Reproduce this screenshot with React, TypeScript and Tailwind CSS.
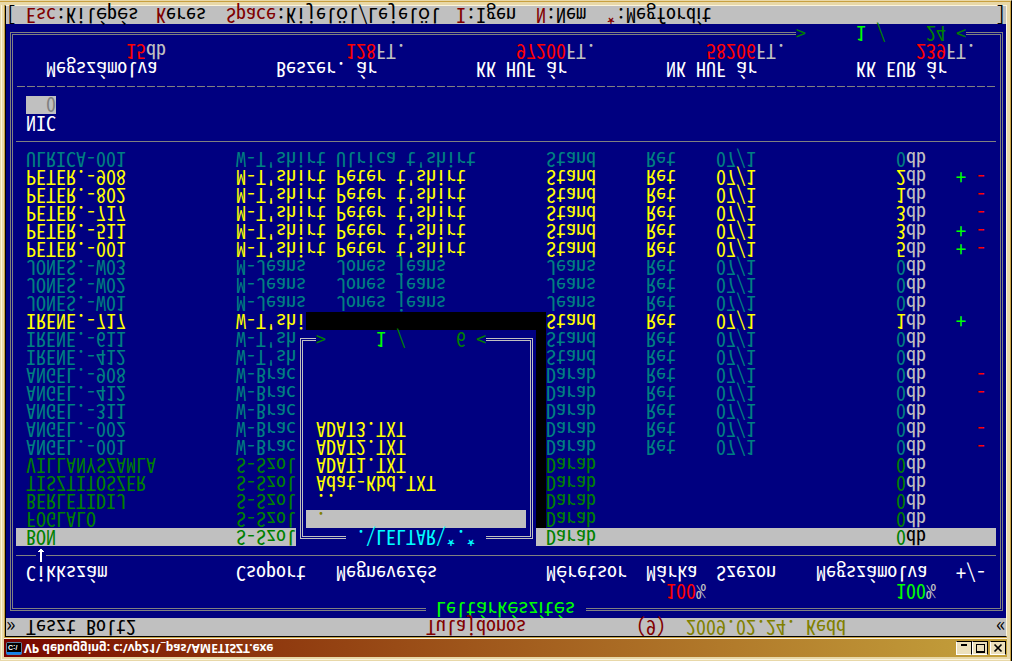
import React from "react";

type Seg = { at: number; text: string; tone: string };

/** One console line: a hundred equal character cells with text runs placed on them. */
function Line({ segs, className = "" }: { segs: Seg[]; className?: string }) {
  return (
    <div className={`grid h-[18px] grid-cols-[repeat(100,minmax(0,1fr))] ${className}`}>
      {segs.map((s, i) => {
        const cell = { gridColumn: `${s.at + 1} / span ${s.text.length}`, gridRow: 1 };
        return (
          <span key={i} style={cell} className={`whitespace-pre ${s.tone}`}>
            {s.text}
          </span>
        );
      })}
    </div>
  );
}

const statusBar: Seg[] = [
  { at: 0, text: "»", tone: "text-black" },
  { at: 2, text: "Teszt Bolt2", tone: "text-black" },
  { at: 42, text: "Tulajdonos", tone: "text-[#800000]" },
  { at: 63, text: "(9)", tone: "text-[#800000]" },
  { at: 68, text: "2009.02.24. Kedd", tone: "text-[#808000]" },
  { at: 99, text: "«", tone: "text-black" },
];

const menu = [
  { at: 2, hot: "Esc", rest: ":Kilépés" },
  { at: 15, hot: "K", rest: "eres" },
  { at: 22, hot: "Space", rest: ":Kijelöl/Lejelöl" },
  { at: 45, hot: "I", rest: ":Igen" },
  { at: 53, hot: "N", rest: ":Nem" },
  { at: 60, hot: "*", rest: ":Megfordít" },
];

const totalLabels: Seg[] = [
  { at: 4, text: "Megszámolva", tone: "text-white" },
  { at: 27, text: "Beszer. ár", tone: "text-white" },
  { at: 47, text: "KK HUF ár", tone: "text-white" },
  { at: 66, text: "NK HUF ár", tone: "text-white" },
  { at: 85, text: "KK EUR ár", tone: "text-white" },
];

const RED = "text-[#ff0000]";
const GREY = "text-[#c0c0c0]";

const totals: Seg[] = [
  { at: 12, text: "15", tone: RED },
  { at: 14, text: "db", tone: GREY },
  { at: 34, text: "128", tone: RED },
  { at: 37, text: "FT.", tone: GREY },
  { at: 51, text: "97200", tone: RED },
  { at: 56, text: "FT.", tone: GREY },
  { at: 70, text: "58206", tone: RED },
  { at: 75, text: "FT.", tone: GREY },
  { at: 91, text: "239", tone: RED },
  { at: 94, text: "FT.", tone: GREY },
];

const percents: Seg[] = [
  { at: 66, text: "100", tone: RED },
  { at: 69, text: "%", tone: GREY },
  { at: 89, text: "100", tone: "text-[#00ff00]" },
  { at: 92, text: "%", tone: GREY },
];

type Item = [code: string, group: string, name: string, size: string, count: number, marks: string];

const items: Item[] = [
  ["BON", "S-Szol", "", "Darab", 0, ""],
  ["FOGLALO", "S-Szol", "", "Darab", 0, ""],
  ["BERLETIDIJ", "S-Szol", "", "Darab", 0, ""],
  ["TISZTITOSZER", "S-Szol", "", "Darab", 0, ""],
  ["VILLANYSZAMLA", "S-Szol", "", "Darab", 0, ""],
  ["ANGEL.-001", "W-Brac", "", "Darab", 0, "-"],
  ["ANGEL.-002", "W-Brac", "", "Darab", 0, "-"],
  ["ANGEL.-311", "W-Brac", "", "Darab", 0, ""],
  ["ANGEL.-412", "W-Brac", "", "Darab", 0, "-"],
  ["ANGEL.-908", "W-Brac", "", "Darab", 0, "-"],
  ["IRENE.-412", "W-T'sh", "", "Stand", 0, ""],
  ["IRENE.-611", "W-T'sh", "", "Stand", 0, ""],
  ["IRENE.-717", "W-T'shi", "", "Stand", 1, "+"],
  ["JONES.-W01", "M-Jeans", "Jones jeans", "Jeans", 0, ""],
  ["JONES.-W02", "M-Jeans", "Jones jeans", "Jeans", 0, ""],
  ["JONES.-W03", "M-Jeans", "Jones jeans", "Jeans", 0, ""],
  ["PETER.-001", "M-T'shirt", "Peter t'shirt", "Stand", 5, "+-"],
  ["PETER.-511", "M-T'shirt", "Peter t'shirt", "Stand", 3, "+-"],
  ["PETER.-717", "M-T'shirt", "Peter t'shirt", "Stand", 3, "-"],
  ["PETER.-802", "M-T'shirt", "Peter t'shirt", "Stand", 1, "-"],
  ["PETER.-908", "M-T'shirt", "Peter t'shirt", "Stand", 2, "+-"],
  ["ULRICA-001", "W-T'shirt", "Ulrica t'shirt", "Stand", 0, ""],
];

const files = ["..", "Adat-Kbd.TXT", "ADAT1.TXT", "ADAT2.TXT", "ADAT3.TXT"];

function ItemRow({ item, selected }: { item: Item; selected: boolean }) {
  const [code, group, name, size, count, marks] = item;
  const service = group.startsWith("S-");
  const tone = service ? "text-[#008000]" : count > 0 ? "text-[#ffff00]" : "text-[#008080]";
  return (
    <tr className={`h-[18px] align-top ${tone} ${selected ? "bg-[#c0c0c0]" : ""}`}>
      <td className="p-0 pl-[10px]">{code}</td>
      <td className="p-0">{group}</td>
      <td className="p-0">{name}</td>
      <td className="p-0">{size}</td>
      <td className="p-0">{service ? "" : "Ret"}</td>
      <td className="p-0">{service ? "" : "07/1"}</td>
      <td className="p-0 pl-[80px]">
        {count}
        <span className={selected ? "text-black" : "text-[#c0c0c0]"}>db</span>
      </td>
      <td className="p-0">
        <div className="grid grid-cols-2">
          <span className="text-[#00ff00]">{marks.includes("+") ? "+" : ""}</span>
          <span className="text-[#ff0000]">{marks.includes("-") ? "-" : ""}</span>
        </div>
      </td>
    </tr>
  );
}

function ItemTable() {
  return (
    <table className="w-full table-fixed border-collapse whitespace-pre text-left">
      <colgroup>
        <col className="w-[220px]" />
        <col className="w-[100px]" />
        <col />
        <col className="w-[100px]" />
        <col className="w-[70px]" />
        <col className="w-[100px]" />
        <col className="w-[140px]" />
        <col className="w-[40px]" />
      </colgroup>
      <thead>
        <tr className="h-[18px] align-top text-white">
          <th className="p-0 pl-[10px] font-normal">Cikkszám</th>
          <th className="p-0 font-normal">Csoport</th>
          <th className="p-0 font-normal">Megnevezés</th>
          <th className="p-0 font-normal">Méretsor</th>
          <th className="p-0 font-normal">Márka</th>
          <th className="p-0 font-normal">Szezon</th>
          <th className="p-0 font-normal">Megszámolva</th>
          <th className="p-0 font-normal">+/-</th>
        </tr>
        <tr className="h-[18px]">
          <td colSpan={8} className="p-0">
            <div className="flex h-[18px] items-start">
              <div className="mt-[8px] h-px w-5 bg-[#808080]" />
              <svg className="h-[18px] w-[10px]" viewBox="0 0 10 18" aria-label="Rendezés">
                <path
                  d="M4 2H6V12H8V13H7V14H6V15H5V16H5V15H4V14H3V13H2V12H4Z"
                  fill="#fff"
                  shapeRendering="crispEdges"
                />
              </svg>
              <div className="mt-[8px] h-px flex-1 bg-[#808080]" />
            </div>
          </td>
        </tr>
      </thead>
      <tbody>
        {items.map((item, i) => (
          <ItemRow key={item[0]} item={item} selected={i === 0} />
        ))}
      </tbody>
    </table>
  );
}

function FileDialog() {
  return (
    <div
      role="dialog"
      className="absolute left-[280px] top-[36px] w-[240px] bg-[#000080] pt-[7px] pr-[3px] pb-[8px] pl-[4px] shadow-[10px_18px_0_0_#000]"
    >
      <div className="relative flex h-[201px] flex-col border-[3px] border-double border-[#c0c0c0] pt-[8px] pr-[4px] pl-[3px]">
        <div className="absolute -top-[10px] left-[43px] h-[18px] w-[140px] bg-[#000080] pl-[10px] text-[#00ffff]">
          .\LELTAR\*.*
        </div>
        <button className="h-[18px] bg-[#c0c0c0] pb-[2px] pl-[10px] text-left text-[#808000]">.</button>
        {files.map((f) => (
          <button key={f} className="h-[18px] pb-[2px] pl-[10px] text-left text-[#ffff00]">
            {f}
          </button>
        ))}
        <div className="absolute -bottom-[11px] left-[13px] grid h-[18px] w-[170px] grid-cols-[repeat(17,minmax(0,1fr))] bg-[#000080] text-[#008000]">
          <span className="col-start-1">{">"}</span>
          <span className="col-start-7 text-[#00ff00]">1</span>
          <span className="col-start-9">/</span>
          <span className="col-start-15">6</span>
          <span className="col-start-17">{"<"}</span>
        </div>
      </div>
    </div>
  );
}

const winButton =
  "flex h-[14px] w-4 items-center justify-center border border-t-white border-r-black border-b-black border-l-white bg-[#ece0bc]";

function TitleBar() {
  return (
    <div className="flex h-[18px] items-center bg-linear-to-r from-[#780000] to-[#c4a23c] pr-px pl-[2px]">
      <svg className="h-[14px] w-4" viewBox="0 0 16 14" aria-hidden="true">
        <rect x="0" y="0" width="16" height="13" rx="2" fill="#5f7f9f" />
        <rect x="0.5" y="0.5" width="15" height="3" rx="1" fill="#1484ee" />
        <rect x="1" y="3" width="14" height="9" fill="#000" />
        <text x="2" y="10" fontSize="7" fontWeight="700" fontFamily="Liberation Sans, sans-serif" fill="#fff">
          C:\
        </text>
      </svg>
      <h1 className="flex-1 pl-[2px] font-['Noto_Sans',sans-serif] text-[12px] leading-[18px] font-bold whitespace-pre text-white">
        VP debugging: c:\vp21\_pas\AMETISZT.exe
      </h1>
      <button aria-label="Kis méret" className={winButton}>
        <svg className="h-3 w-3" viewBox="0 0 12 12">
          <path d="M3 9H9" stroke="#000" strokeWidth="2" />
        </svg>
      </button>
      <button aria-label="Teljes méret" className={winButton}>
        <svg className="h-3 w-3" viewBox="0 0 12 12">
          <path d="M2 2H10V10H2Z M2 3H10" fill="none" stroke="#000" strokeWidth="1" shapeRendering="crispEdges" />
        </svg>
      </button>
      <button aria-label="Bezárás" className={`ml-[2px] ${winButton}`}>
        <svg className="h-3 w-3" viewBox="0 0 12 12">
          <path d="M2.500 2.500L9.500 9.500M9.500 2.500L2.500 9.500" stroke="#000" strokeWidth="1.700" />
        </svg>
      </button>
    </div>
  );
}

export default function App() {
  return (
    <div className="-scale-y-100 border-r border-b border-r-black border-b-[#e8d8a8] bg-[#e8d8a8]">
      <div className="border-r border-b border-[#c8a040] pt-px pl-px">
        <div className="border-t border-l border-[#fbf4dc] pt-[2px] pr-px pl-[2px]">
          <div className="pr-[2px]">
            <TitleBar />
          </div>
          <div className="mr-[2px] mb-[3px] border-t border-[#fbf4dc]">
            <div className="border-t border-l border-[#c8a040]">
              <div className="border-t border-r border-b border-l border-t-black border-r-[#fbf4dc] border-b-[#fbf4dc] border-l-black">
                <main className="bg-[#000080] font-['Noto_Sans_Mono_CJK_SC','DejaVu_Sans_Mono',monospace] text-[20px] leading-[16px]">
                  <Line segs={statusBar} className="relative z-10 bg-[#c0c0c0]" />
                  <div className="pt-[7px] pr-[3px] pb-[8px] pl-[4px]">
                    <div className="relative border-[3px] border-double border-[#808080] pt-[8px] pb-[7px]">
                      <Line
                        className="absolute -top-[10px] -right-[6px] -left-[7px]"
                        segs={[{ at: 42, text: " Leltárkészítés ", tone: "bg-[#000080] text-[#00ff00]" }]}
                      />
                      <div className="-mr-[6px] -ml-[7px]">
                        <Line segs={percents} />
                      </div>
                      <div className="relative mr-[4px] ml-[3px]">
                        <ItemTable />
                        <FileDialog />
                      </div>
                      <div className="mr-[4px] ml-[3px] h-[18px] pt-[8px]">
                        <div className="h-px bg-[#808080]" />
                      </div>
                      <div className="ml-[13px] flex flex-col items-start">
                        <label htmlFor="nic" className="h-[18px] text-white">
                          NIC
                        </label>
                        <input
                          id="nic"
                          defaultValue="0"
                          className="h-[18px] w-[30px] bg-[#c0c0c0] pb-[2px] text-right text-[#808080] outline-none"
                        />
                      </div>
                      <div className="mr-[4px] ml-[3px] h-[18px] pt-[9px]">
                        <div className="h-px bg-[repeating-linear-gradient(90deg,transparent_0_1px,#808080_1px_9px,transparent_9px_10px)]" />
                      </div>
                      <div className="-mr-[6px] -ml-[7px]">
                        <Line segs={totalLabels} />
                        <Line segs={totals} />
                      </div>
                      <Line
                        className="absolute -right-[6px] -bottom-[11px] -left-[7px]"
                        segs={[
                          { at: 79, text: " ".repeat(17), tone: "bg-[#000080]" },
                          { at: 79, text: ">", tone: "text-[#008000]" },
                          { at: 85, text: "1", tone: "text-[#00ff00]" },
                          { at: 87, text: "/", tone: "text-[#008000]" },
                          { at: 92, text: "24", tone: "text-[#008000]" },
                          { at: 95, text: "<", tone: "text-[#008000]" },
                        ]}
                      />
                    </div>
                  </div>
                  <nav className="grid h-[18px] grid-cols-[repeat(100,minmax(0,1fr))] bg-[#c0c0c0] whitespace-pre text-black">
                    <span className="col-start-1 row-start-1">[</span>
                    {menu.map((m) => (
                      <button
                        key={m.at}
                        className="pb-[2px] text-left"
                        style={{ gridColumn: `${m.at + 1} / span ${m.hot.length + m.rest.length}`, gridRow: 1 }}
                      >
                        <span className="text-[#800000]">{m.hot}</span>
                        {m.rest}
                      </button>
                    ))}
                    <span className="col-start-100 row-start-1">]</span>
                  </nav>
                </main>
              </div>
            </div>
          </div>
        </div>
      </div>
    </div>
  );
}
